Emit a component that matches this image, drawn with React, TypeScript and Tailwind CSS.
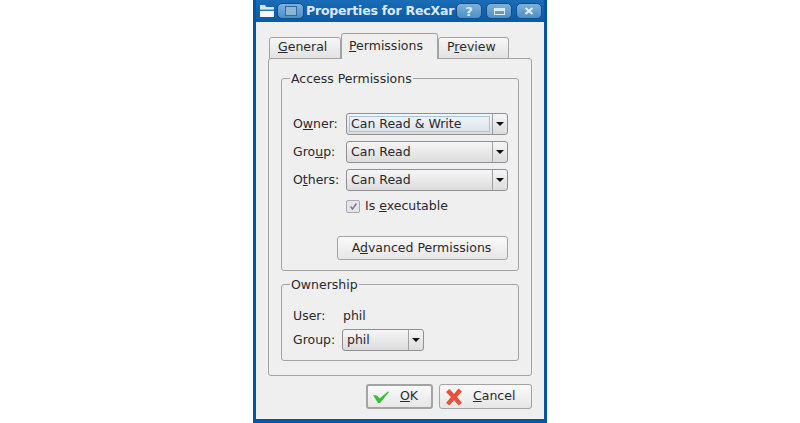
import React from "react";

const Combo = ({ label, focused, className }: { label: string; focused?: boolean; className: string }) => (
  <div
    className={`flex h-[22px] rounded-[3px] border border-[#8f9093] bg-gradient-to-b from-[#f6f6f6] to-[#dcdcdc] ${className}`}
  >
    <div className="flex min-w-0 flex-1 items-center p-[2px]">
      <div
        className={`flex h-full flex-1 items-center ${
          focused ? "border border-[#a9c2d6] bg-gradient-to-b from-[#eef3f7] to-[#dbe5ed] pl-[1px]" : "pl-[2px]"
        }`}
      >
        {label}
      </div>
    </div>
    <div className="flex w-[15px] shrink-0 items-center justify-center border-l border-[#a0a0a0]">
      <div className="h-0 w-0 border-x-[4px] border-t-[4px] border-x-transparent border-t-[#111]" />
    </div>
  </div>
);

const Button = ({
  children,
  className,
}: {
  children: React.ReactNode;
  className: string;
}) => (
  <div
    className={`flex items-center rounded-[3px] border border-[#a3a3a3] bg-gradient-to-b from-[#fafafa] to-[#e6e6e6] ${className}`}
  >
    {children}
  </div>
);

const TitleButton = ({ children }: { children: React.ReactNode }) => (
  <div className="flex h-[16px] w-[26px] items-center justify-center rounded-[5px] border border-[#0f4f8e] bg-gradient-to-b from-[#7fb0d8] to-[#4c8fc8] text-[13px] font-bold leading-none text-[#dcebf7]">
    {children}
  </div>
);

const App: React.FC = () => {
  return (
    <div className="flex h-[423px] w-[800px] justify-center overflow-hidden bg-white font-['DejaVu_Sans',sans-serif] text-[12.5px] text-[#2a2a2a]">
      <div className="flex h-full w-[294px] flex-col border-x-[3px] border-b-[4px] border-[#07559e] bg-[#efefef]">
        {/* Title bar */}
        <div className="flex h-[22px] shrink-0 items-center bg-gradient-to-b from-[#1a6cb6] to-[#0a5aa5] pl-[2px] pr-[2px]">
          <svg width="18" height="16" viewBox="0 0 18 16" className="shrink-0">
            <path d="M2 2h5l1 2h8v3H2z" fill="#d8e6f3" />
            <path d="M2 8h14v6H2z" fill="#f4f8fb" />
            <path d="M2 7h14" stroke="#4c86b8" />
          </svg>
          <div className="ml-[1px] flex h-[16px] w-[27px] shrink-0 items-center justify-center rounded-[5px] border border-[#0f4f8e] bg-gradient-to-b from-[#7fb0d8] to-[#4c8fc8]">
            <div className="h-[10px] w-[12px] border border-[#2a6ba3] bg-[#8fb5d6]" />
          </div>
          <div className="ml-[2px] flex-1 whitespace-nowrap text-[12.5px] font-bold tracking-[-0.2px] text-[#dde9f4]">
            Properties for RecXar
          </div>
          <div className="flex shrink-0 gap-[4px]">
            <TitleButton>?</TitleButton>
            <TitleButton>
              <div className="h-[7px] w-[11px] border border-t-[3px] border-[#dcebf7]" />
            </TitleButton>
            <TitleButton>
              <svg width="10" height="8" viewBox="0 0 10 8">
                <path d="M1.500 1l7 6M8.500 1l-7 6" stroke="#e4f0f9" strokeWidth="2" />
              </svg>
            </TitleButton>
          </div>
        </div>

        <div className="flex flex-1 flex-col px-[12px] pt-[11px]">
          {/* Tabs */}
          <div className="relative z-10 flex h-[26px] shrink-0 items-end pl-[1px]">
            <div className="flex h-[22px] w-[72px] items-center rounded-t-[3px] border border-[#a3a3a3] bg-gradient-to-b from-[#f7f7f7] to-[#e2e2e2] pb-[2px] pl-[8px]">
              <span>
                <span className="underline">G</span>eneral
              </span>
            </div>
            <div className="flex h-[26px] w-[97px] items-center rounded-t-[3px] border border-b-0 border-[#a3a3a3] border-t-[#86a7c4] bg-[#efefef] pl-[7px]">
              <span>
                <span className="underline">P</span>ermissions
              </span>
            </div>
            <div className="flex h-[22px] w-[71px] items-center rounded-t-[3px] border border-[#a3a3a3] bg-gradient-to-b from-[#f7f7f7] to-[#e2e2e2] pb-[2px] pl-[8px]">
              <span>
                P<span className="underline">r</span>eview
              </span>
            </div>
          </div>

          {/* Tab panel */}
          <div className="-mt-px flex h-[318px] flex-col gap-[5px] rounded-[3px] border border-[#a3a3a3] px-[12px] pt-[11px]">
            <fieldset className="h-[201px] rounded-[3px] border border-[#a3a3a3] pl-[11px] pr-[10px]">
              <legend className="ml-[-3px] px-[1px] pt-[2px] leading-[14px]">Access Permissions</legend>
              <div className="mt-[27px] flex flex-col gap-[6px]">
                <div className="flex items-center justify-between">
                  <span>
                    O<span className="underline">w</span>ner:
                  </span>
                  <Combo label="Can Read & Write" focused className="w-[162px]" />
                </div>
                <div className="flex items-center justify-between">
                  <span>
                    Gro<span className="underline">u</span>p:
                  </span>
                  <Combo label="Can Read" className="w-[162px]" />
                </div>
                <div className="flex items-center justify-between">
                  <span>
                    O<span className="underline">t</span>hers:
                  </span>
                  <Combo label="Can Read" className="w-[162px]" />
                </div>
              </div>
              <div className="mt-[6px] flex items-center pl-[53px]">
                <div className="flex h-[13px] w-[14px] items-center justify-center rounded-[2px] border border-[#a8a8b4] bg-[#e4e4ea]">
                  <svg width="9" height="9" viewBox="0 0 9 9">
                    <path d="M1.500 4.500L3.500 7L7.500 1.500" fill="none" stroke="#7d7d9a" strokeWidth="1.6" />
                  </svg>
                </div>
                <span className="ml-[5px]">
                  Is <span className="underline">e</span>xecutable
                </span>
              </div>
              <div className="mt-[20px] flex justify-end">
                <Button className="h-[24px] w-[171px] justify-center pr-[2px] pt-[1px]">
                  <span>
                    A<span className="underline">d</span>vanced Permissions
                  </span>
                </Button>
              </div>
            </fieldset>

            <fieldset className="h-[85px] rounded-[3px] border border-[#a3a3a3] px-[11px]">
              <legend className="ml-[-3px] px-[1px] pt-[2px] leading-[14px]">Ownership</legend>
              <div className="mt-[16px] flex h-[16px] items-center">
                <span className="w-[50px]">User:</span>
                <span>phil</span>
              </div>
              <div className="mt-[5px] flex items-center">
                <span className="w-[49px]">Group:</span>
                <Combo label="phil" className="w-[82px]" />
              </div>
            </fieldset>
          </div>

          {/* Dialog buttons */}
          <div className="mt-[8px] flex justify-end gap-[6px]">
            <Button className="h-[25px] w-[67px] border-2 border-[#8ba6bf] pl-[4px]">
              <svg width="18" height="14" viewBox="0 0 18 14" className="shrink-0">
                <path d="M1 5l4 .5 2.500 3L16 1.500l1 .5L8 13H6z" fill="#35c035" />
              </svg>
              <span className="ml-[10px]">
                <span className="underline">O</span>K
              </span>
            </Button>
            <Button className="h-[25px] w-[93px] pl-[5px]">
              <svg width="18" height="18" viewBox="0 0 18 18" className="shrink-0">
                <path d="M1 4l3.500-3L9 6l4.500-5.500L17 3.500 12 9l5 6-3.500 2.500L9 12l-4.500 5.500L1 15l5-6z" fill="#e8503a" />
              </svg>
              <span className="ml-[10px]">
                <span className="underline">C</span>ancel
              </span>
            </Button>
          </div>
        </div>
      </div>
    </div>
  );
};

export default App;
